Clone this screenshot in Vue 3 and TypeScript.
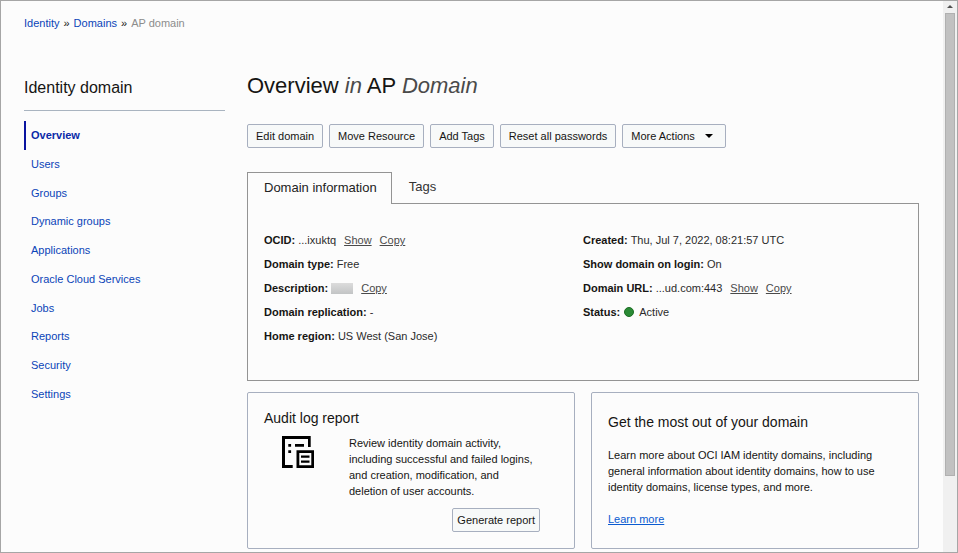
<script setup lang="ts">
import { ref } from 'vue'

interface Detail {
  label: string
  value?: string
  actions?: string[]
  redacted?: boolean
  status?: boolean
}

const navItems = [
  'Overview', 'Users', 'Groups', 'Dynamic groups', 'Applications',
  'Oracle Cloud Services', 'Jobs', 'Reports', 'Security', 'Settings',
]
const activeNav = ref('Overview')

const toolbar = ['Edit domain', 'Move Resource', 'Add Tags', 'Reset all passwords']

const tabs = ['Domain information', 'Tags']
const activeTab = ref('Domain information')

const details: Detail[][] = [
  [
    { label: 'OCID:', value: '...ixuktq', actions: ['Show', 'Copy'] },
    { label: 'Domain type:', value: 'Free' },
    { label: 'Description:', redacted: true, actions: ['Copy'] },
    { label: 'Domain replication:', value: '-' },
    { label: 'Home region:', value: 'US West (San Jose)' },
  ],
  [
    { label: 'Created:', value: 'Thu, Jul 7, 2022, 08:21:57 UTC' },
    { label: 'Show domain on login:', value: 'On' },
    { label: 'Domain URL:', value: '...ud.com:443', actions: ['Show', 'Copy'] },
    { label: 'Status:', value: 'Active', status: true },
  ],
]
</script>

<template>
  <div class="window">
    <div class="page">
      <nav class="breadcrumb" aria-label="Breadcrumb">
        <a href="#">Identity</a><span>»</span><a href="#">Domains</a><span>»</span><span class="current">AP domain</span>
      </nav>

      <div class="layout">
        <aside class="sidebar">
          <h2>Identity domain</h2>
          <nav class="side-nav" aria-label="Identity domain">
            <a
              v-for="item in navItems"
              :key="item"
              href="#"
              :class="{ active: item === activeNav }"
              @click.prevent="activeNav = item"
            >{{ item }}</a>
          </nav>
        </aside>

        <main class="main">
          <h1>Overview <em>in</em> AP <em>Domain</em></h1>

          <div class="toolbar">
            <button v-for="label in toolbar" :key="label" type="button" class="btn">{{ label }}</button>
            <button type="button" class="btn">
              More Actions
              <svg class="caret" viewBox="0 0 8 4" aria-hidden="true"><path d="M0 0h8L4 4z" /></svg>
            </button>
          </div>

          <div class="tabs" role="tablist">
            <button
              v-for="tab in tabs"
              :key="tab"
              type="button"
              role="tab"
              class="tab"
              :class="{ selected: tab === activeTab }"
              :aria-selected="tab === activeTab"
              @click="activeTab = tab"
            >{{ tab }}</button>
          </div>

          <section class="panel">
            <dl v-for="(column, i) in details" :key="i" class="details">
              <div v-for="row in column" :key="row.label" class="row">
                <dt>{{ row.label }}</dt>
                <dd>
                  <span v-if="row.redacted" class="redacted"></span>
                  <span v-if="row.status" class="dot"></span>
                  <span v-if="row.value">{{ row.value }}</span>
                  <a v-for="action in row.actions" :key="action" href="#">{{ action }}</a>
                </dd>
              </div>
            </dl>
          </section>

          <div class="cards">
            <section class="card audit">
              <h3>Audit log report</h3>
              <div class="audit-body">
                <svg class="report-icon" viewBox="0 0 32 32" aria-hidden="true">
                  <path d="M0 0h28.7v11H26V3H3v26h7.7v3H0z" />
                  <path d="M6.3 8h2.8v2.8H6.3zM13 8h9v2.8h-9zM6.3 14.3h2.8v2.8H6.3z" />
                  <path fill-rule="evenodd" d="M14.5 14.3H32V32H14.5zM17.3 17v12.2h12V17z" />
                  <path d="M19 19.4h8.5v2.4H19zM19 24.4h8.5v2.4H19z" />
                </svg>
                <div class="audit-text">
                  <p>
                    Review identity domain activity, including successful and failed logins,
                    and creation, modification, and deletion of user accounts.
                  </p>
                  <button type="button" class="btn compact">Generate report</button>
                </div>
              </div>
            </section>

            <section class="card learn">
              <h3>Get the most out of your domain</h3>
              <p>
                Learn more about OCI IAM identity domains, including general information
                about identity domains, how to use identity domains, license types, and more.
              </p>
              <a href="#">Learn more</a>
            </section>
          </div>
        </main>
      </div>
    </div>

    <div class="scrollbar" aria-hidden="true">
      <svg class="arrow" viewBox="0 0 6 3"><path d="M0 3h6L3 0z" /></svg>
      <div class="thumb"></div>
    </div>
  </div>
</template>

<style>
body {
  margin: 0;
  background: #fcfcfc;
}
</style>

<style scoped>
.window {
  box-sizing: border-box;
  min-height: 100vh;
  display: flex;
  border: 1px solid #a6a6a6;
  background: #fcfcfc;
  color: #161513;
  font: 11px/16px "Liberation Sans", Arial, sans-serif;
}

.page {
  flex: 1;
  min-width: 0;
  padding: 14px 24px 3px 23px;
}

h1, h2, h3, p, dl, dd {
  margin: 0;
  font-weight: normal;
}

a {
  color: #0b44b8;
  text-decoration: none;
}

.breadcrumb {
  display: flex;
  gap: 4px;
}

.breadcrumb .current {
  color: #8c8c8c;
}

.layout {
  display: grid;
  grid-template-columns: 201px minmax(0, 1fr);
  column-gap: 22px;
  margin-top: 41px;
}

.sidebar h2 {
  padding: 6px 0 12px;
  border-bottom: 1px solid #a9b4c0;
  font-size: 16px;
  line-height: 20px;
}

.side-nav {
  display: grid;
  grid-auto-rows: 1fr;
  height: 287px;
  margin-top: 10px;
}

.side-nav a {
  display: flex;
  align-items: center;
  padding-left: 5px;
  border-left: 2px solid transparent;
}

.side-nav a.active {
  border-color: #0a14a0;
  color: #0a2aa8;
  font-weight: bold;
}

h1 {
  font-size: 22px;
  line-height: 28px;
}

h1 em {
  color: #4a4a4a;
}

.toolbar {
  display: flex;
  gap: 6px;
  margin-top: 24px;
}

.btn {
  display: flex;
  align-items: center;
  height: 24px;
  padding: 0 8px;
  border: 1px solid #a7afbf;
  border-radius: 2px;
  background: #f7f9f9;
  color: #161513;
  font: inherit;
}

.btn.compact {
  padding: 0 4px;
  align-self: flex-end;
}

.caret {
  width: 8px;
  height: 4px;
  margin: 0 4px 0 10px;
}

.tabs {
  display: flex;
  margin-top: 24px;
}

.tab {
  height: 31px;
  padding: 0 14px 2px 16px;
  border: 1px solid transparent;
  border-bottom: 0;
  background: none;
  color: #333;
  font: inherit;
  font-size: 13px;
}

.tab.selected {
  position: relative;
  height: 32px;
  margin-bottom: -1px;
  border-color: #949494;
  background: #fcfcfc;
  color: #222;
}

.panel {
  display: grid;
  grid-template-columns: 1fr 1fr;
  padding: 24px 0 32px;
  border: 1px solid #949494;
}

.details {
  padding-left: 16px;
}

.details + .details {
  padding-left: 0;
}

.row {
  display: flex;
  gap: 3px;
  line-height: 24px;
}

dt {
  font-weight: bold;
}

dd {
  display: flex;
  align-items: center;
  color: #2b2b2b;
}

dd a {
  margin-left: 8px;
  color: #4a4a4a;
  text-decoration: underline;
}

.redacted {
  width: 22px;
  height: 11px;
  background: linear-gradient(#dcdcdc, #c2c4c5);
}

.dot {
  box-sizing: border-box;
  width: 10px;
  height: 10px;
  margin: 0 5px 0 1px;
  border: 1px solid #1b6e23;
  border-radius: 50%;
  background: #2a8a35;
}

.cards {
  display: grid;
  grid-template-columns: 1fr 1fr;
  gap: 16px;
  margin-top: 11px;
}

.card {
  border: 1px solid #a7afbf;
  border-radius: 2px;
}

.card h3 {
  font-size: 14px;
  line-height: 18px;
}

.audit {
  padding: 16px 34px 16px 16px;
}

.audit-body {
  display: flex;
  gap: 35px;
  padding: 8px 0 0 18px;
}

.report-icon {
  flex: none;
  width: 32px;
  height: 34px;
}

.audit-text {
  flex: 1;
  display: flex;
  flex-direction: column;
  gap: 9px;
}

.learn {
  padding: 20px 32px 20px 16px;
}

.learn p {
  margin: 16px 0;
}

.learn a {
  color: #0b5bd0;
  text-decoration: underline;
}

.scrollbar {
  width: 10px;
  padding: 0 2px;
  background: #f0f0f0;
}

.arrow {
  display: block;
  width: 6px;
  height: 3px;
  margin: 4px auto 5px;
  fill: #505050;
}

.thumb {
  box-sizing: border-box;
  height: 84%;
  border: 1px solid #b0b0b0;
  background: #c1c1c1;
}
</style>
